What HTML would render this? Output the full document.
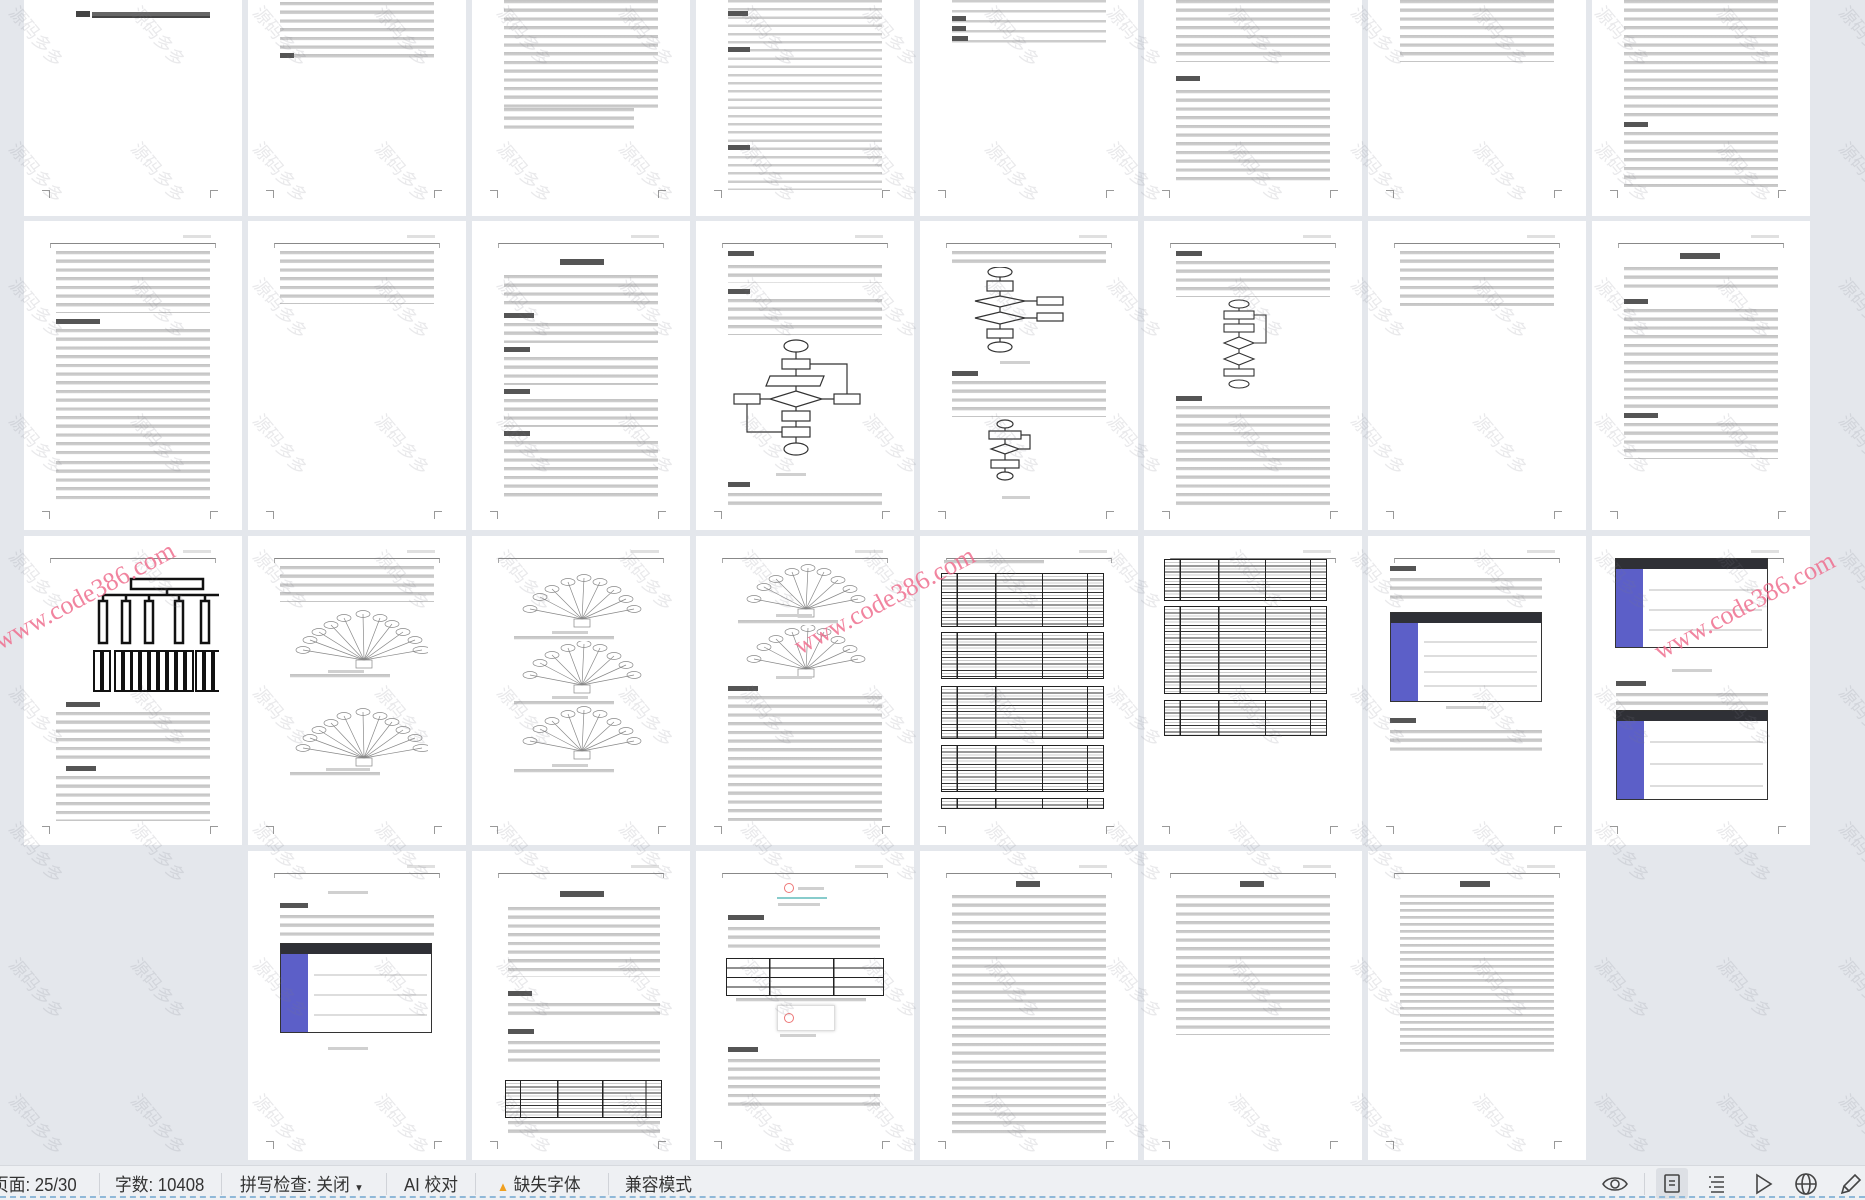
<!DOCTYPE html>
<html><head><meta charset="utf-8">
<style>
*{margin:0;padding:0;box-sizing:border-box}
body{width:1865px;height:1200px;overflow:hidden;background:#e4e7ec;position:relative;font-family:"Liberation Sans","Noto Sans CJK SC",sans-serif}
.p{position:absolute;width:218px;background:#fff;overflow:hidden}
.r1{top:-100px;height:316px}.r2{top:221px;height:309px}.r3{top:536px;height:309px}.r4{top:851px;height:309px}
.hd{position:absolute;left:26px;top:22px;width:166px;height:5px;border-top:1px solid #888;border-left:1px solid #aaa;border-right:1px solid #aaa}
.hd:after{content:"";position:absolute;right:4px;top:-9px;width:28px;height:3px;background:#e0e0e0}
.cl,.cr{position:absolute;width:8px;height:8px}
.cl{left:18px;border-right:1px solid #999;border-top:1px solid #999}
.cr{left:186px;border-left:1px solid #999;border-top:1px solid #999}
.t{position:absolute;left:32px;width:154px;background:repeating-linear-gradient(to bottom,#c2c2c2 0,#cfcfcf 3px,#fff 3.6px,#fff 8.7px)}
.h{position:absolute;left:32px;height:5px;background:#555}
.tb{position:absolute;border:1.5px solid #222;background:
 linear-gradient(to right,transparent 9%,#222 9%,#222 9.8%,transparent 9.8%,transparent 33%,#222 33%,#222 33.8%,transparent 33.8%,transparent 62%,#222 62%,#222 62.8%,transparent 62.8%,transparent 90%,#222 90%,#222 90.8%,transparent 90.8%),
 repeating-linear-gradient(to bottom,#fff 0,#fff 2px,#ccc 2px,#ccc 3px,#fff 3px,#fff 5.3px,#333 5.3px,#333 6.3px)}
.ss{position:absolute;background:#fff;border:1px solid #333;overflow:hidden}
.ss .bar{position:absolute;left:0;top:0;right:0;height:10px;background:#2f3036}
.ss .sb{position:absolute;left:0;top:10px;bottom:0;width:18%;background:#5c5fc8}
.ss .rw{position:absolute;left:22%;right:3%;height:2px;background:#ddd}
.cap{position:absolute;height:3px;background:#d0d0d0}
.st{position:absolute;left:0;top:1165px;width:1865px;height:35px;background:#eef0f3;border-top:1px solid #d6d9de;font-size:18px;color:#333}
.st span{position:absolute;top:5px;white-space:nowrap;transform:scaleX(.93);transform-origin:0 50%}
.sep{position:absolute;top:7px;width:1px;height:22px;background:#d0d3d8}
.wm{position:absolute;left:0;top:0;pointer-events:none}
</style></head><body>

<!-- ROW 1 -->
<div class="p r1" style="left:24px"><div style="position:absolute;top:112px;left:68px;width:118px;height:6px;background:#666;border-bottom:2px solid #444"></div><div style="position:absolute;top:111px;left:52px;width:14px;height:6px;background:#444"></div><div class="cl" style="top:290px"></div><div class="cr" style="top:290px"></div></div>
<div class="p r1" style="left:248px"><div class="t" style="top:102px;height:56px"></div><div class="h" style="top:153px;width:14px"></div><div class="cl" style="top:290px"></div><div class="cr" style="top:290px"></div></div>
<div class="p r1" style="left:472px"><div class="t" style="top:100px;height:108px"></div><div class="t" style="top:208px;height:22px;width:130px"></div><div class="cl" style="top:290px"></div><div class="cr" style="top:290px"></div></div>
<div class="p r1" style="left:696px"><div class="t" style="top:100px;height:190px;background:repeating-linear-gradient(to bottom,#ccc 0,#ccc 2.5px,#fff 2.5px,#fff 8.2px)"></div><div class="h" style="top:111px;width:20px"></div><div class="h" style="top:147px;width:22px"></div><div class="h" style="top:245px;width:22px"></div><div class="cl" style="top:290px"></div><div class="cr" style="top:290px"></div></div>
<div class="p r1" style="left:920px"><div class="t" style="top:100px;height:45px;background:repeating-linear-gradient(to bottom,#ccc 0,#ccc 2.5px,#fff 2.5px,#fff 10px)"></div><div class="h" style="top:116px;width:14px"></div><div class="h" style="top:126px;width:14px"></div><div class="h" style="top:136px;width:16px"></div><div class="cl" style="top:290px"></div><div class="cr" style="top:290px"></div></div>
<div class="p r1" style="left:1144px"><div class="t" style="top:100px;height:62px"></div><div class="h" style="top:176px;width:24px"></div><div class="t" style="top:190px;height:92px"></div><div class="cl" style="top:290px"></div><div class="cr" style="top:290px"></div></div>
<div class="p r1" style="left:1368px"><div class="t" style="top:100px;height:62px"></div><div class="cl" style="top:290px"></div><div class="cr" style="top:290px"></div></div>
<div class="p r1" style="left:1592px"><div class="t" style="top:100px;height:120px"></div><div class="h" style="top:222px;width:24px"></div><div class="t" style="top:232px;height:55px"></div><div class="cl" style="top:290px"></div><div class="cr" style="top:290px"></div></div>

<!-- ROW 2 -->
<div class="p r2" style="left:24px"><div class="hd"></div><div class="t" style="top:30px;height:62px"></div><div class="h" style="top:98px;width:44px"></div><div class="t" style="top:108px;height:130px"></div><div class="t" style="top:240px;height:40px"></div><div class="cl" style="top:290px"></div><div class="cr" style="top:290px"></div></div>
<div class="p r2" style="left:248px"><div class="hd"></div><div class="t" style="top:30px;height:53px"></div><div class="cl" style="top:290px"></div><div class="cr" style="top:290px"></div></div>
<div class="p r2" style="left:472px"><div class="hd"></div><div class="h" style="top:38px;left:88px;width:44px;height:6px"></div><div class="t" style="top:54px;height:35px"></div><div class="h" style="top:92px;width:30px"></div><div class="t" style="top:102px;height:20px"></div><div class="h" style="top:126px;width:26px"></div><div class="t" style="top:136px;height:28px"></div><div class="h" style="top:168px;width:26px"></div><div class="t" style="top:178px;height:28px"></div><div class="h" style="top:210px;width:26px"></div><div class="t" style="top:220px;height:60px"></div><div class="cl" style="top:290px"></div><div class="cr" style="top:290px"></div></div>
<div class="p r2" style="left:696px"><div class="hd"></div><div class="h" style="top:30px;width:26px"></div><div class="t" style="top:44px;height:18px"></div><div class="h" style="top:68px;width:22px"></div><div class="t" style="top:78px;height:36px"></div>
<svg style="position:absolute;left:30px;top:118px" width="140" height="130" fill="none" stroke="#333" stroke-width="1.2"><ellipse cx="70" cy="7" rx="12" ry="6"/><rect x="56" y="20" width="28" height="10"/><polygon points="44,37 98,37 94,47 40,47"/><polygon points="70,52 96,60 70,68 44,60"/><rect x="8" y="55" width="26" height="10"/><rect x="108" y="55" width="26" height="10"/><rect x="56" y="72" width="28" height="10"/><rect x="56" y="88" width="28" height="10"/><ellipse cx="70" cy="110" rx="12" ry="6"/><path d="M70 13V20M70 30V37M70 47V52M70 68V72M70 82V88M70 98V104M44 60H34M96 60H108M121 55V25H84M21 65V93H56"/></svg>
<div class="cap" style="top:252px;left:80px;width:30px"></div><div class="h" style="top:261px;width:22px"></div><div class="t" style="top:272px;height:16px"></div><div class="cl" style="top:290px"></div><div class="cr" style="top:290px"></div></div>
<div class="p r2" style="left:920px"><div class="hd"></div><div class="t" style="top:30px;height:15px"></div>
<svg style="position:absolute;left:45px;top:46px" width="130" height="90" fill="none" stroke="#333" stroke-width="1.2"><ellipse cx="35" cy="5" rx="12" ry="5"/><rect x="22" y="14" width="26" height="10"/><polygon points="35,29 60,34 35,40 10,34"/><polygon points="35,45 60,51 35,57 10,51"/><rect x="72" y="30" width="26" height="8"/><rect x="72" y="46" width="26" height="8"/><rect x="22" y="62" width="26" height="9"/><ellipse cx="35" cy="80" rx="12" ry="5"/><path d="M35 10V14M35 24V29M35 40V45M35 57V62M35 71V75M60 34H72M60 51H72"/></svg>
<div class="cap" style="top:140px;left:80px;width:30px"></div><div class="h" style="top:150px;width:26px"></div><div class="t" style="top:160px;height:36px"></div>
<svg style="position:absolute;left:65px;top:198px" width="60" height="70" fill="none" stroke="#333" stroke-width="1.2"><ellipse cx="20" cy="5" rx="8" ry="4"/><rect x="4" y="12" width="32" height="8"/><polygon points="20,25 34,30 20,35 6,30"/><rect x="6" y="41" width="28" height="8"/><ellipse cx="20" cy="57" rx="8" ry="4"/><path d="M20 9V12M20 20V25M20 35V41M20 49V53M36 16H45V30H34"/></svg>
<div class="cap" style="top:275px;left:82px;width:28px"></div><div class="cl" style="top:290px"></div><div class="cr" style="top:290px"></div></div>
<div class="p r2" style="left:1144px"><div class="hd"></div><div class="h" style="top:30px;width:26px"></div><div class="t" style="top:40px;height:36px"></div>
<svg style="position:absolute;left:60px;top:78px" width="70" height="90" fill="none" stroke="#333" stroke-width="1.1"><ellipse cx="35" cy="5" rx="10" ry="4"/><rect x="20" y="12" width="30" height="8"/><rect x="20" y="25" width="30" height="8"/><polygon points="35,38 50,44 35,50 20,44"/><polygon points="35,54 50,60 35,66 20,60"/><rect x="20" y="70" width="30" height="7"/><ellipse cx="35" cy="85" rx="10" ry="4"/><path d="M35 9V12M35 20V25M35 33V38M35 50V54M35 66V70M50 44H62V16H50"/></svg>
<div class="h" style="top:175px;width:26px"></div><div class="t" style="top:185px;height:100px"></div><div class="cl" style="top:290px"></div><div class="cr" style="top:290px"></div></div>
<div class="p r2" style="left:1368px"><div class="hd"></div><div class="t" style="top:30px;height:55px"></div><div class="cl" style="top:290px"></div><div class="cr" style="top:290px"></div></div>
<div class="p r2" style="left:1592px"><div class="hd"></div><div class="h" style="top:32px;left:88px;width:40px;height:6px"></div><div class="t" style="top:46px;height:26px"></div><div class="h" style="top:78px;width:24px"></div><div class="t" style="top:88px;height:100px"></div><div class="h" style="top:192px;width:34px"></div><div class="t" style="top:202px;height:36px"></div><div class="cl" style="top:290px"></div><div class="cr" style="top:290px"></div></div>

<!-- ROW 3 -->
<div class="p r3" style="left:24px"><div class="hd"></div>
<svg style="position:absolute;left:45px;top:40px" width="150" height="120" fill="none" stroke="#111" stroke-width="2.5"><rect x="62" y="3" width="72" height="10"/><path d="M98 13V19M34 19H175M34 19V25M57 19V25M80 19V25M110 19V25M136 19V25M162 19V25"/>
<g><rect x="30" y="25" width="8" height="42"/><rect x="53" y="25" width="8" height="42"/><rect x="76" y="25" width="8" height="42"/><rect x="106" y="25" width="8" height="42"/><rect x="132" y="25" width="8" height="42"/><rect x="158" y="25" width="8" height="42"/></g>
<g stroke-width="2"><rect x="25" y="75" width="7" height="40"/><rect x="34" y="75" width="7" height="40"/><rect x="46" y="75" width="7" height="40"/><rect x="55" y="75" width="7" height="40"/><rect x="63" y="75" width="7" height="40"/><rect x="72" y="75" width="7" height="40"/><rect x="81" y="75" width="7" height="40"/><rect x="90" y="75" width="7" height="40"/><rect x="99" y="75" width="7" height="40"/><rect x="108" y="75" width="7" height="40"/><rect x="117" y="75" width="7" height="40"/><rect x="127" y="75" width="7" height="40"/><rect x="136" y="75" width="7" height="40"/><rect x="145" y="75" width="7" height="40"/></g></svg>
<div class="h" style="top:166px;left:42px;width:34px"></div><div class="t" style="top:176px;height:52px;left:32px"></div><div class="h" style="top:230px;left:42px;width:30px"></div><div class="t" style="top:240px;height:45px"></div><div class="cl" style="top:290px"></div><div class="cr" style="top:290px"></div></div>
<div class="p r3" style="left:248px"><div class="hd"></div><div class="t" style="top:30px;height:36px"></div>
<svg style="position:absolute;left:40px;top:64px" width="140" height="210" fill="none" stroke="#888" stroke-width="0.7"><g id="f1"><path d="M76 60L15 50M76 60L22 40M76 60L31 32M76 60L43 25M76 60L56 18M76 60L75 14M76 60L92 18M76 60L104 24M76 60L115 32M76 60L127 40M76 60L134 50"/><ellipse cx="15" cy="50" rx="7" ry="3.5"/><ellipse cx="22" cy="40" rx="7" ry="3.5"/><ellipse cx="31" cy="32" rx="7" ry="3.5"/><ellipse cx="43" cy="25" rx="7" ry="3.5"/><ellipse cx="56" cy="18" rx="7" ry="3.5"/><ellipse cx="75" cy="14" rx="7" ry="3.5"/><ellipse cx="92" cy="18" rx="7" ry="3.5"/><ellipse cx="104" cy="24" rx="7" ry="3.5"/><ellipse cx="115" cy="32" rx="7" ry="3.5"/><ellipse cx="127" cy="40" rx="7" ry="3.5"/><ellipse cx="134" cy="50" rx="9" ry="3.5"/><rect x="68" y="60" width="16" height="8"/></g><use href="#f1" y="98"/></svg>
<div class="cap" style="top:134px;left:80px;width:36px"></div><div class="t" style="top:138px;height:5px;width:100px;left:42px"></div><div class="cap" style="top:232px;left:78px;width:44px"></div><div class="t" style="top:236px;height:5px;width:90px;left:42px"></div><div class="cl" style="top:290px"></div><div class="cr" style="top:290px"></div></div>
<div class="p r3" style="left:472px"><div class="hd"></div>
<svg style="position:absolute;left:40px;top:28px" width="140" height="200" fill="none" stroke="#888" stroke-width="0.7"><g id="f2"><path d="M70 55L18 45M70 55L28 33M70 55L40 25M70 55L56 18M70 55L72 14M70 55L88 18M70 55L102 26M70 55L114 35M70 55L122 45"/><ellipse cx="18" cy="45" rx="7" ry="3.5"/><ellipse cx="28" cy="33" rx="7" ry="3.5"/><ellipse cx="40" cy="25" rx="7" ry="3.5"/><ellipse cx="56" cy="18" rx="7" ry="3.5"/><ellipse cx="72" cy="14" rx="7" ry="3.5"/><ellipse cx="88" cy="18" rx="7" ry="3.5"/><ellipse cx="102" cy="26" rx="7" ry="3.5"/><ellipse cx="114" cy="35" rx="7" ry="3.5"/><ellipse cx="122" cy="45" rx="7" ry="3.5"/><rect x="62" y="55" width="16" height="8"/></g><use href="#f2" y="66"/><use href="#f2" y="132"/></svg>
<div class="cap" style="top:95px;left:80px;width:36px"></div><div class="t" style="top:100px;height:5px;width:100px;left:42px"></div><div class="cap" style="top:160px;left:80px;width:36px"></div><div class="t" style="top:165px;height:5px;width:100px;left:42px"></div><div class="cap" style="top:228px;left:80px;width:36px"></div><div class="t" style="top:233px;height:5px;width:100px;left:42px"></div><div class="cl" style="top:290px"></div><div class="cr" style="top:290px"></div></div>
<div class="p r3" style="left:696px"><div class="hd"></div>
<svg style="position:absolute;left:40px;top:18px" width="140" height="140" fill="none" stroke="#888" stroke-width="0.7"><use href="#f2"/><use href="#f2" y="60"/></svg>
<div class="cap" style="top:78px;left:80px;width:36px"></div><div class="t" style="top:84px;height:5px;width:100px;left:42px"></div><div class="cap" style="top:140px;left:80px;width:36px"></div><div class="h" style="top:150px;width:30px"></div><div class="t" style="top:160px;height:125px"></div><div class="cl" style="top:290px"></div><div class="cr" style="top:290px"></div></div>
<div class="p r3" style="left:920px"><div class="hd"></div><div class="t" style="top:24px;height:5px;width:100px;left:24px"></div>
<div class="tb" style="left:21px;top:37px;width:163px;height:54px"></div><div class="tb" style="left:21px;top:96px;width:163px;height:47px"></div><div class="tb" style="left:21px;top:150px;width:163px;height:53px"></div><div class="tb" style="left:21px;top:209px;width:163px;height:47px"></div><div class="tb" style="left:21px;top:262px;width:163px;height:11px"></div><div class="cl" style="top:290px"></div><div class="cr" style="top:290px"></div></div>
<div class="p r3" style="left:1144px"><div class="hd"></div>
<div class="tb" style="left:20px;top:23px;width:163px;height:42px"></div><div class="tb" style="left:20px;top:70px;width:163px;height:88px"></div><div class="tb" style="left:20px;top:164px;width:163px;height:36px"></div><div class="cl" style="top:290px"></div><div class="cr" style="top:290px"></div></div>
<div class="p r3" style="left:1368px"><div class="hd"></div><div class="h" style="top:30px;width:26px;left:22px"></div><div class="t" style="top:42px;height:26px;left:22px;width:152px"></div>
<div class="ss" style="left:22px;top:76px;width:152px;height:90px"><div class="bar"></div><div class="sb"></div><div class="rw" style="top:28px"></div><div class="rw" style="top:42px"></div><div class="rw" style="top:58px"></div><div class="rw" style="top:72px"></div></div>
<div class="cap" style="top:170px;left:78px;width:40px"></div><div class="h" style="top:182px;width:26px;left:22px"></div><div class="t" style="top:194px;height:26px;left:22px;width:152px"></div><div class="cl" style="top:290px"></div><div class="cr" style="top:290px"></div></div>
<div class="p r3" style="left:1592px"><div class="hd"></div>
<div class="ss" style="left:23px;top:22px;width:153px;height:90px"><div class="bar"></div><div class="sb"></div><div class="rw" style="top:30px"></div><div class="rw" style="top:50px"></div><div class="rw" style="top:70px"></div></div>
<div class="cap" style="top:133px;left:80px;width:40px"></div><div class="h" style="top:145px;width:30px;left:24px"></div><div class="t" style="top:157px;height:14px;left:24px;width:152px"></div>
<div class="ss" style="left:24px;top:174px;width:152px;height:90px"><div class="bar"></div><div class="sb"></div><div class="rw" style="top:30px"></div><div class="rw" style="top:52px"></div><div class="rw" style="top:74px"></div></div>
<div class="cl" style="top:290px"></div><div class="cr" style="top:290px"></div></div>

<!-- ROW 4 -->
<div class="p r4" style="left:248px"><div class="hd"></div><div class="cap" style="top:40px;left:80px;width:40px"></div><div class="h" style="top:52px;width:28px"></div><div class="t" style="top:64px;height:24px"></div>
<div class="ss" style="left:32px;top:92px;width:152px;height:90px"><div class="bar"></div><div class="sb"></div><div class="rw" style="top:30px"></div><div class="rw" style="top:50px"></div><div class="rw" style="top:70px"></div></div>
<div class="cap" style="top:196px;left:80px;width:40px"></div><div class="cl" style="top:290px"></div><div class="cr" style="top:290px"></div></div>
<div class="p r4" style="left:472px"><div class="hd"></div><div class="h" style="top:40px;left:88px;width:44px;height:6px"></div><div class="t" style="top:56px;height:70px;left:36px;width:152px"></div><div class="h" style="top:140px;left:36px;width:24px"></div><div class="t" style="top:152px;height:14px;left:36px;width:152px"></div><div class="h" style="top:178px;left:36px;width:26px"></div><div class="t" style="top:190px;height:26px;left:36px;width:152px"></div><div class="tb" style="left:33px;top:229px;width:157px;height:38px"></div><div class="t" style="top:270px;height:14px;left:36px;width:152px"></div><div class="cl" style="top:290px"></div><div class="cr" style="top:290px"></div></div>
<div class="p r4" style="left:696px"><div class="hd"></div><div style="position:absolute;left:88px;top:32px;width:10px;height:10px;border:1px solid #e77;border-radius:50%"></div><div class="cap" style="top:36px;left:102px;width:26px"></div><div style="position:absolute;left:81px;top:46px;width:50px;height:2px;background:#8cc"></div><div class="cap" style="top:52px;left:82px;width:42px"></div><div class="h" style="top:64px;width:36px;left:32px"></div><div class="t" style="top:76px;height:24px;left:32px;width:152px"></div><div class="tb" style="left:30px;top:107px;width:158px;height:38px;background:linear-gradient(to right,transparent 27%,#222 27%,#222 28%,transparent 28%,transparent 68%,#222 68%,#222 69%,transparent 69%),repeating-linear-gradient(to bottom,#fff 0,#fff 8.5px,#222 8.5px,#222 9.5px)"></div><div class="t" style="top:147px;height:5px;width:130px;left:40px"></div><div style="position:absolute;left:81px;top:154px;width:58px;height:26px;border:1px solid #ddd;box-shadow:0 0 3px #ccc"></div><div style="position:absolute;left:88px;top:162px;width:10px;height:10px;border:1px solid #e77;border-radius:50%"></div><div class="cap" style="top:183px;left:84px;width:36px"></div><div class="h" style="top:196px;width:30px;left:32px"></div><div class="t" style="top:208px;height:52px;left:32px;width:152px"></div><div class="cl" style="top:290px"></div><div class="cr" style="top:290px"></div></div>
<div class="p r4" style="left:920px"><div class="hd"></div><div class="h" style="top:30px;left:96px;width:24px;height:6px"></div><div class="t" style="top:44px;height:240px"></div><div class="cl" style="top:290px"></div><div class="cr" style="top:290px"></div></div>
<div class="p r4" style="left:1144px"><div class="hd"></div><div class="h" style="top:30px;left:96px;width:24px;height:6px"></div><div class="t" style="top:44px;height:140px"></div><div class="cl" style="top:290px"></div><div class="cr" style="top:290px"></div></div>
<div class="p r4" style="left:1368px"><div class="hd"></div><div class="h" style="top:30px;left:92px;width:30px;height:6px"></div><div class="t" style="top:44px;height:160px;background:repeating-linear-gradient(to bottom,#c4c4c4 0,#ccc 2.5px,#fff 3px,#fff 7px)"></div><div class="cl" style="top:290px"></div><div class="cr" style="top:290px"></div></div>

<!-- watermark overlay -->
<svg class="wm" width="1865" height="1165"><defs><pattern id="w" width="122" height="136" patternUnits="userSpaceOnUse" x="-10" y="-5"><text x="0" y="0" transform="translate(18,18) rotate(50)" font-size="18" fill="rgba(120,120,130,0.16)" font-family="Noto Sans CJK SC,sans-serif">源码多多</text></pattern></defs><rect width="1865" height="1165" fill="url(#w)"/>
<text x="0" y="650" transform="rotate(-28 0 650)" font-size="26" fill="#ef6f8f" font-family="Liberation Serif,serif" opacity="0.85">www.code386.com</text>
<text x="800" y="655" transform="rotate(-28 800 655)" font-size="26" fill="#ef6f8f" font-family="Liberation Serif,serif" opacity="0.85">www.code386.com</text>
<text x="1660" y="660" transform="rotate(-28 1660 660)" font-size="26" fill="#ef6f8f" font-family="Liberation Serif,serif" opacity="0.85">www.code386.com</text></svg>

<!-- status bar -->
<div class="st">
<span style="left:-8px">页面: 25/30</span><div class="sep" style="left:99px"></div>
<span style="left:115px">字数: 10408</span><div class="sep" style="left:221px"></div>
<span style="left:240px">拼写检查: 关闭 <small style="font-size:10px">▼</small></span><div class="sep" style="left:386px"></div>
<span style="left:404px">AI 校对</span><div class="sep" style="left:475px"></div>
<span style="left:497px"><b style="color:#f0a020;font-size:13px">▲</b> 缺失字体</span><div class="sep" style="left:608px"></div>
<span style="left:625px">兼容模式</span>
<svg style="position:absolute;left:1600px;top:6px" width="30" height="24" fill="none" stroke="#444" stroke-width="1.6"><path d="M3 12C8 4 22 4 27 12C22 20 8 20 3 12Z"/><circle cx="15" cy="12" r="4"/></svg>
<div class="sep" style="left:1644px"></div>
<div style="position:absolute;left:1656px;top:2px;width:32px;height:31px;background:#dde0e5;border-radius:3px"></div>
<svg style="position:absolute;left:1662px;top:7px" width="20" height="22" fill="none" stroke="#444" stroke-width="1.6"><rect x="3" y="2" width="14" height="17" rx="1"/><path d="M7 8H13M7 12H13"/></svg>
<svg style="position:absolute;left:1705px;top:7px" width="22" height="22" fill="none" stroke="#444" stroke-width="1.6"><path d="M4 4H6M9 4H19M6 9H19M4 14H6M9 14H19M6 19H19"/></svg>
<svg style="position:absolute;left:1752px;top:6px" width="22" height="24" fill="none" stroke="#444" stroke-width="1.6"><path d="M5 3L19 12L5 21Z"/></svg>
<svg style="position:absolute;left:1793px;top:5px" width="26" height="26" fill="none" stroke="#444" stroke-width="1.6"><circle cx="13" cy="13" r="10"/><ellipse cx="13" cy="13" rx="4" ry="10"/><path d="M3 13H23"/></svg>
<svg style="position:absolute;left:1838px;top:5px" width="26" height="26" fill="none" stroke="#444" stroke-width="1.6"><path d="M4 22L6 15L17 4L22 9L11 20Z M6 15L11 20"/></svg>
<div style="position:absolute;left:0;bottom:2px;width:1865px;border-top:2px dashed #8fb8d8"></div>
</div>
</body></html>
